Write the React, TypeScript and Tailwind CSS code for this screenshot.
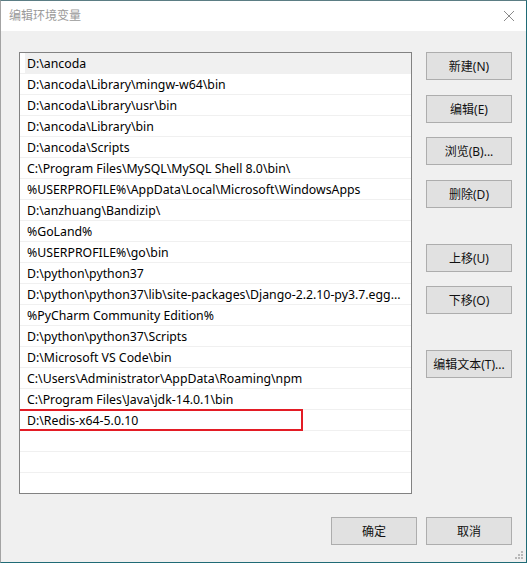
const paths = [
  "D:\\ancoda",
  "D:\\ancoda\\Library\\mingw-w64\\bin",
  "D:\\ancoda\\Library\\usr\\bin",
  "D:\\ancoda\\Library\\bin",
  "D:\\ancoda\\Scripts",
  "C:\\Program Files\\MySQL\\MySQL Shell 8.0\\bin\\",
  "%USERPROFILE%\\AppData\\Local\\Microsoft\\WindowsApps",
  "D:\\anzhuang\\Bandizip\\",
  "%GoLand%",
  "%USERPROFILE%\\go\\bin",
  "D:\\python\\python37",
  "D:\\python\\python37\\lib\\site-packages\\Django-2.2.10-py3.7.egg...",
  "%PyCharm Community Edition%",
  "D:\\python\\python37\\Scripts",
  "D:\\Microsoft VS Code\\bin",
  "C:\\Users\\Administrator\\AppData\\Roaming\\npm",
  "C:\\Program Files\\Java\\jdk-14.0.1\\bin",
  "D:\\Redis-x64-5.0.10",
  "",
  "",
  "",
];

function Btn({ label, className = "" }: { label: string; className?: string }) {
  return (
    <button className={`flex h-[28px] w-[86px] items-center justify-center border border-[#adadad] bg-[#e1e1e1] pt-[1px] text-[12px] text-[#111] ${className}`}>
      {label}
    </button>
  );
}

export default function App() {
  return (
    <div
      className="flex h-[563px] w-[527px] flex-col overflow-hidden border-t border-r border-b border-l border-t-[#5b7d84] border-r-[#1f6b76] border-b-[#1f6b76] border-l-[#a3a3a3] bg-[#f0f0f0] text-[12px] text-black"
      style={{ fontFamily: "'Noto Sans', 'Noto Sans CJK SC', sans-serif" }}
    >
      {/* 标题栏 */}
      <div className="flex h-[30px] shrink-0 items-center justify-between bg-white pl-[8px] pr-[10px]">
        <span className="text-[12px] text-[#9a9a9a]">编辑环境变量</span>
        <svg width="12" height="12" viewBox="0 0 12 12" className="mr-[1px]">
          <path d="M1 1L11 11M11 1L1 11" stroke="#8a8a8a" strokeWidth="1" />
        </svg>
      </div>

      {/* 主体 */}
      <div className="relative flex flex-1 flex-col pl-[18px] pr-[14px] pt-[21px]">
        <div className="flex">
          <div className="h-[442px] w-[393px] overflow-hidden border border-[#828282] bg-white">
            {paths.map((p, i) => (
              <div key={i} className="relative h-[21px] border-b border-[#f0f0f0] pl-[5px]">
                <div className={`flex h-full items-center whitespace-nowrap pl-[2px] pt-[2px] text-[12.3px] ${i === 0 ? "bg-[#f0f0f0]" : ""}`}>
                  {p}
                </div>
                {i === 17 && (
                  <div className="absolute left-[-2px] top-[-1px] h-[22px] w-[285px] border-2 border-[#e31c25]" />
                )}
              </div>
            ))}
          </div>

          <div className="ml-[14px] flex flex-col">
            <Btn label="新建(N)" />
            <Btn label="编辑(E)" className="mt-[15px]" />
            <Btn label="浏览(B)..." className="mt-[14px]" />
            <Btn label="删除(D)" className="mt-[15px]" />
            <Btn label="上移(U)" className="mt-[36px]" />
            <Btn label="下移(O)" className="mt-[14px]" />
            <Btn label="编辑文本(T)..." className="mt-[36px]" />
          </div>
        </div>

        <div className="mt-[23px] flex justify-end gap-[9px]">
          <Btn label="确定" />
          <Btn label="取消" />
        </div>

        {/* 调整大小手柄 */}
        <svg width="8" height="8" viewBox="0 0 8 8" className="absolute bottom-[3px] right-[3px]">
          <rect x="6" y="0" width="2" height="2" fill="#b8b8b8" />
          <rect x="3" y="3" width="2" height="2" fill="#b8b8b8" />
          <rect x="6" y="3" width="2" height="2" fill="#b8b8b8" />
          <rect x="0" y="6" width="2" height="2" fill="#b8b8b8" />
          <rect x="3" y="6" width="2" height="2" fill="#b8b8b8" />
          <rect x="6" y="6" width="2" height="2" fill="#b8b8b8" />
        </svg>
      </div>
    </div>
  );
}
